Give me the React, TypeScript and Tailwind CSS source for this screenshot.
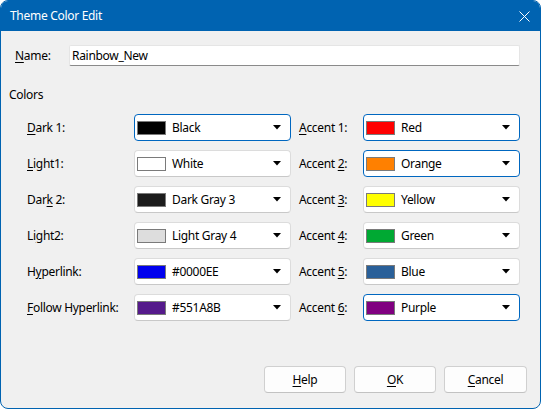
import React from "react";

type Item = { label: React.ReactNode; color: string; name: string; focused?: boolean };

const U = ({ children }: { children: React.ReactNode }) => (
  <span className="underline underline-offset-[2px] decoration-[1px]">{children}</span>
);

const left: Item[] = [
  { label: <><U>D</U>ark 1:</>, color: "#000000", name: "Black", focused: true },
  { label: <><U>L</U>ight1:</>, color: "#ffffff", name: "White" },
  { label: <>Dar<U>k</U> 2:</>, color: "#1c1c1c", name: "Dark Gray 3" },
  { label: <>Li<U>g</U>ht2:</>, color: "#dddddd", name: "Light Gray 4" },
  { label: <>H<U>y</U>perlink:</>, color: "#0000ee", name: "#0000EE" },
  { label: <><U>F</U>ollow Hyperlink:</>, color: "#551a8b", name: "#551A8B" },
];

const right: Item[] = [
  { label: <><U>A</U>ccent 1:</>, color: "#ff0000", name: "Red", focused: true },
  { label: <>Accent <U>2</U>:</>, color: "#ff8000", name: "Orange", focused: true },
  { label: <>Accent <U>3</U>:</>, color: "#ffff00", name: "Yellow" },
  { label: <>Accent <U>4</U>:</>, color: "#00a933", name: "Green" },
  { label: <>Accent <U>5</U>:</>, color: "#2a6099", name: "Blue" },
  { label: <>Accent <U>6</U>:</>, color: "#800080", name: "Purple", focused: true },
];

function Combo({ item }: { item: Item }) {
  return (
    <div
      className={
        "h-[27px] w-[157px] shrink-0 rounded-[4px] bg-white flex items-center pl-[2px] pr-[9px] border " +
        (item.focused ? "border-[#0067c0]" : "border-[#dcdcdc] border-b-[#c8c8c8]")
      }
    >
      <div className="w-[29px] h-[14px] border border-[#7a7a7a] shrink-0" style={{ backgroundColor: item.color }} />
      <span className="ml-[6px] flex-1 text-black leading-none">{item.name}</span>
      <svg width="8" height="5" viewBox="0 0 8 5" className="shrink-0">
        <path d="M0 0 H8 L4 4.5 Z" fill="#000" />
      </svg>
    </div>
  );
}

function Row({ l, r }: { l: Item; r: Item }) {
  return (
    <div className="flex items-center h-[27px]">
      <div className="w-[133px] shrink-0 pl-[26px] text-black whitespace-nowrap">{l.label}</div>
      <Combo item={l} />
      <div className="w-[72px] shrink-0 pl-[8px] text-black whitespace-nowrap">{r.label}</div>
      <Combo item={r} />
    </div>
  );
}

function Btn({ children, w }: { children: React.ReactNode; w: string }) {
  return (
    <div
      className={
        "h-[27px] rounded-[4px] bg-[#fdfdfd] border border-[#d0d0d0] border-b-[#c2c2c2] flex items-center justify-center text-black " +
        w
      }
    >
      {children}
    </div>
  );
}

export default function App() {
  return (
    <div
      className="w-[542px] h-[409px] bg-white text-[12px] tracking-[-0.3px]"
      style={{ fontFamily: '"Noto Sans", "Open Sans", sans-serif' }}
    >
      <div className="w-[541px] h-[409px] rounded-[8px] border border-[#0063b1] bg-[#f0f0f0] overflow-hidden flex flex-col">
        <div className="h-[30px] bg-[#0063b1] flex items-center justify-between pl-[9px] pr-[10px] shrink-0">
          <span className="text-white">Theme Color Edit</span>
          <svg width="11" height="11" viewBox="0 0 11 11">
            <path d="M0.5 0.5 L10.5 10.5 M10.5 0.5 L0.5 10.5" stroke="#fff" strokeWidth="1" />
          </svg>
        </div>
        <div className="flex items-center mt-[14px] h-[21px]">
          <div className="w-[68px] pl-[14px] text-black">
            <U>N</U>ame:
          </div>
          <div className="w-[451px] h-[21px] bg-white border border-[#e5e5e5] border-b-[#8a8a8a] rounded-[2px] flex items-center pl-[2px] text-black">
            Rainbow_New
          </div>
        </div>
        <div className="mt-[20px] pl-[8px] h-[17px] text-black leading-[17px]">Colors</div>
        <div className="mt-[11px] flex flex-col gap-[9px]">
          {left.map((l, i) => (
            <Row key={i} l={l} r={right[i]} />
          ))}
        </div>
        <div className="mt-[45px] flex justify-end gap-[8px] pr-[13px]">
          <Btn w="w-[82px]">
            <U>H</U>elp
          </Btn>
          <Btn w="w-[82px]">
            <U>O</U>K
          </Btn>
          <Btn w="w-[83px]">
            <U>C</U>ancel
          </Btn>
        </div>
      </div>
    </div>
  );
}
